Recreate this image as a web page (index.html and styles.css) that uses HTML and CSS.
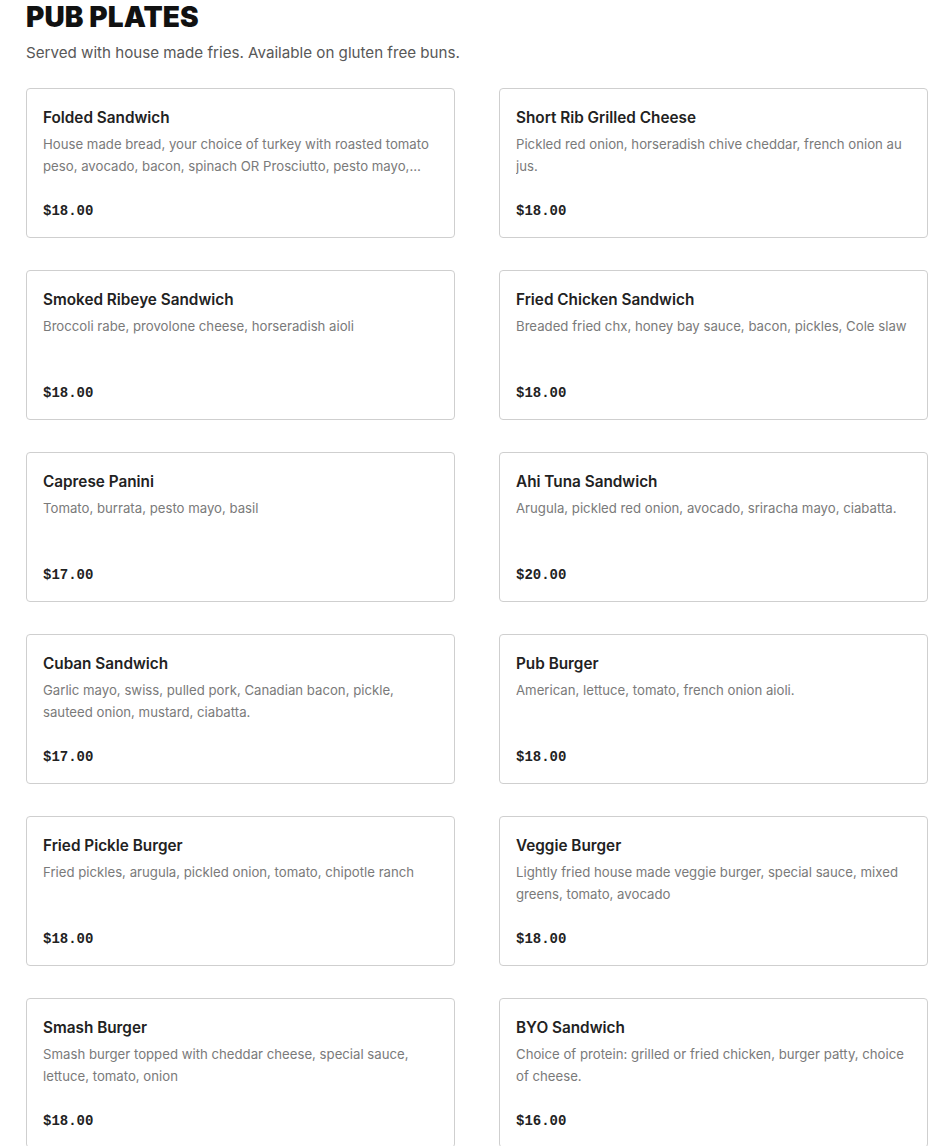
FILE: index.html
```html
<!DOCTYPE html>
<html lang="en">
<head>
<meta charset="utf-8">
<title>Pub Plates</title>
<link rel="stylesheet" href="styles.css">
</head>
<body>
<section class="menu">
  <h1 class="menu-title">PUB PLATES</h1>
  <p class="menu-sub">Served with house made fries. Available on gluten free buns.</p>
  <div class="grid">
    <div class="card"><h2 class="name">Folded Sandwich</h2><p class="desc">House made bread, your choice of turkey with roasted tomato peso, avocado, bacon, spinach OR Prosciutto, pesto mayo, arugula, fresh mozzarella, balsamic glaze.</p><div class="price">$18.00</div></div>
    <div class="card"><h2 class="name">Short Rib Grilled Cheese</h2><p class="desc">Pickled red onion, horseradish chive cheddar, french onion au jus.</p><div class="price">$18.00</div></div>
    <div class="card"><h2 class="name">Smoked Ribeye Sandwich</h2><p class="desc">Broccoli rabe, provolone cheese, horseradish aioli</p><div class="price">$18.00</div></div>
    <div class="card"><h2 class="name">Fried Chicken Sandwich</h2><p class="desc">Breaded fried chx, honey bay sauce, bacon, pickles, Cole slaw</p><div class="price">$18.00</div></div>
    <div class="card"><h2 class="name">Caprese Panini</h2><p class="desc">Tomato, burrata, pesto mayo, basil</p><div class="price">$17.00</div></div>
    <div class="card"><h2 class="name">Ahi Tuna Sandwich</h2><p class="desc">Arugula, pickled red onion, avocado, sriracha mayo, ciabatta.</p><div class="price">$20.00</div></div>
    <div class="card"><h2 class="name">Cuban Sandwich</h2><p class="desc">Garlic mayo, swiss, pulled pork, Canadian bacon, pickle, sauteed onion, mustard, ciabatta.</p><div class="price">$17.00</div></div>
    <div class="card"><h2 class="name">Pub Burger</h2><p class="desc">American, lettuce, tomato, french onion aioli.</p><div class="price">$18.00</div></div>
    <div class="card"><h2 class="name">Fried Pickle Burger</h2><p class="desc">Fried pickles, arugula, pickled onion, tomato, chipotle ranch</p><div class="price">$18.00</div></div>
    <div class="card"><h2 class="name">Veggie Burger</h2><p class="desc">Lightly fried house made veggie burger, special sauce, mixed greens, tomato, avocado</p><div class="price">$18.00</div></div>
    <div class="card"><h2 class="name">Smash Burger</h2><p class="desc">Smash burger topped with cheddar cheese, special sauce, lettuce, tomato, onion</p><div class="price">$18.00</div></div>
    <div class="card"><h2 class="name">BYO Sandwich</h2><p class="desc">Choice of protein: grilled or fried chicken, burger patty, choice of cheese.</p><div class="price">$16.00</div></div>
  </div>
</section>
</body>
</html>
```
FILE: styles.css
```css
* { box-sizing: border-box; }
html, body { margin: 0; padding: 0; background: #fff; }
body {
  font-family: "Inter", "Liberation Sans", sans-serif;
  color: #222;
}
.menu {
  width: 902px;
  margin-left: 26px;
}
.menu-title {
  margin: 0;
  padding-top: 2px;
  font-family: "Inter", sans-serif;
  font-weight: 900;
  font-size: 28px;
  line-height: 30px;
  letter-spacing: 0.1px;
  color: #111;
}
.menu-sub {
  margin: 9px 0 0;
  font-size: 15.15px;
  line-height: 24px;
  color: #585858;
}
.grid {
  margin-top: 23px;
  display: grid;
  grid-template-columns: 429px 429px;
  column-gap: 44px;
  row-gap: 32px;
}
.card {
  border: 1px solid #cfcfcf;
  border-radius: 4px;
  padding: 17px 16px 15px 16px;
  height: 150px;
}
.name {
  margin: 0;
  font-size: 15.3px;
  font-weight: 600;
  line-height: 24px;
  color: #222;
}
.desc {
  margin: 3px 0 0;
  font-size: 13.2px;
  line-height: 22px;
  height: 44px;
  color: #7a7a7a;
  overflow: hidden;
  display: -webkit-box;
  -webkit-line-clamp: 2;
  -webkit-box-orient: vertical;
}
.price {
  margin-top: 23px;
  font-family: "Liberation Mono", "DejaVu Sans Mono", monospace;
  font-weight: 700;
  font-size: 14px;
  line-height: 22px;
  color: #222;
}
```
